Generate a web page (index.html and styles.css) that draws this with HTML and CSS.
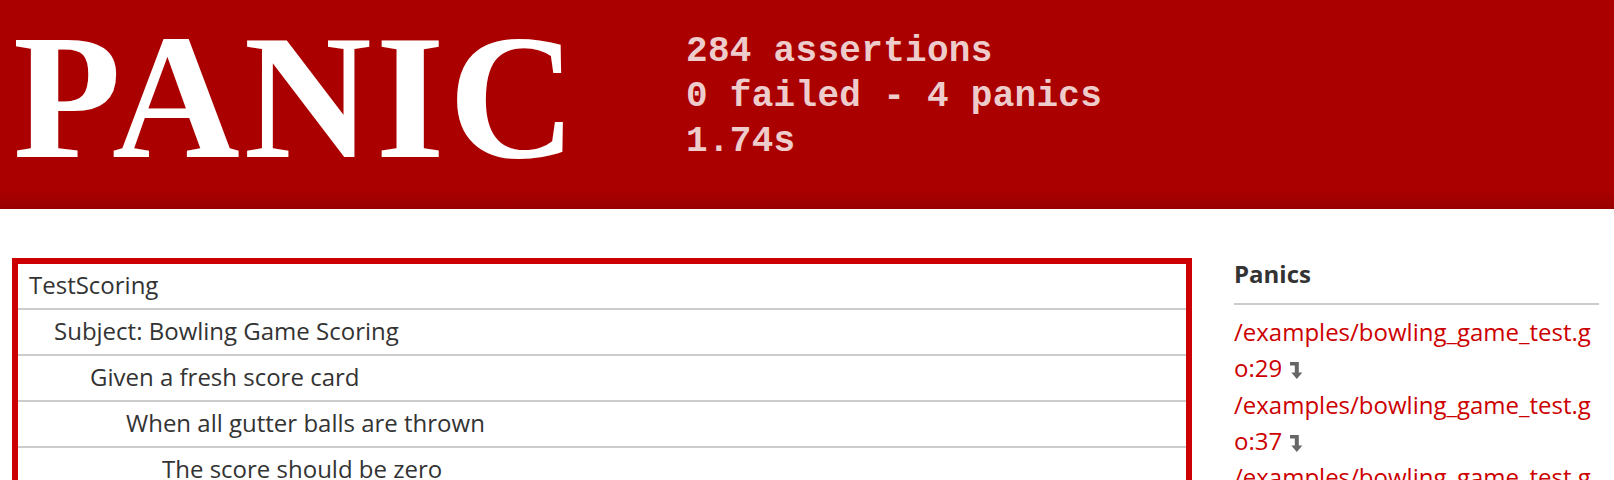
FILE: index.html
```html
<!DOCTYPE html>
<html>
<head>
<meta charset="utf-8">
<link rel="stylesheet" href="styles.css">
</head>
<body>
<header class="banner">
  <div class="status">PANIC</div>
  <div class="stats">
    <div>284 assertions</div>
    <div>0 failed - 4 panics</div>
    <div>1.74s</div>
  </div>
</header>
<main class="main">
  <section class="results">
    <div class="row depth-0">TestScoring</div>
    <div class="row depth-1">Subject: Bowling Game Scoring</div>
    <div class="row depth-2">Given a fresh score card</div>
    <div class="row depth-3">When all gutter balls are thrown</div>
    <div class="row depth-4">The score should be zero</div>
    <div class="row depth-3">When all throws knock down only one pin</div>
    <div class="row depth-4">The score should be 20</div>
  </section>
  <aside class="sidebar">
    <h3 class="side-title">Panics</h3>
    <ul class="panic-list">
      <li><a class="panic-link" href="#">/examples/bowling_game_test.go:29</a> <svg class="jump" viewBox="0 0 13 17" width="13" height="17"><path d="M0 0 H8.8 V10.5 H12.3 L6.8 17 L1.3 10.5 H4.8 V3.6 H0 Z" fill="#666"/></svg></li>
      <li><a class="panic-link" href="#">/examples/bowling_game_test.go:37</a> <svg class="jump" viewBox="0 0 13 17" width="13" height="17"><path d="M0 0 H8.8 V10.5 H12.3 L6.8 17 L1.3 10.5 H4.8 V3.6 H0 Z" fill="#666"/></svg></li>
      <li><a class="panic-link" href="#">/examples/bowling_game_test.go:45</a> <svg class="jump" viewBox="0 0 13 17" width="13" height="17"><path d="M0 0 H8.8 V10.5 H12.3 L6.8 17 L1.3 10.5 H4.8 V3.6 H0 Z" fill="#666"/></svg></li>
      <li><a class="panic-link" href="#">/examples/bowling_game_test.go:53</a> <svg class="jump" viewBox="0 0 13 17" width="13" height="17"><path d="M0 0 H8.8 V10.5 H12.3 L6.8 17 L1.3 10.5 H4.8 V3.6 H0 Z" fill="#666"/></svg></li>
    </ul>
  </aside>
</main>
</body>
</html>
```

FILE: styles.css
```css
html, body {
  margin: 0;
  padding: 0;
  background: #fff;
}

body {
  font-family: "Open Sans", "Liberation Sans", sans-serif;
  color: #333;
}

.banner {
  display: flex;
  align-items: flex-start;
  height: 209px;
  box-sizing: border-box;
  padding-left: 13px;
  background: linear-gradient(to bottom, #aa0000 0, #ab0000 90%, #990000 100%);
}

.status {
  width: 673px;
  flex-shrink: 0;
  font-family: "Liberation Serif", "Times New Roman", serif;
  font-weight: bold;
  font-size: 177px;
  line-height: 177px;
  letter-spacing: 4px;
  color: #fff;
  margin-top: 9px;
}

.stats {
  padding-top: 29px;
  font-family: "Liberation Mono", "Courier New", monospace;
  font-weight: bold;
  font-size: 36px;
  line-height: 45px;
  letter-spacing: 0.3px;
  color: #eecccc;
}

.main {
  display: flex;
  align-items: flex-start;
  gap: 42px;
  padding: 49px 15px 0 12px;
}

.results {
  width: 1180px;
  box-sizing: border-box;
  border: 6px solid #cc0000;
  flex-shrink: 0;
}

.row {
  font-size: 24px;
  line-height: 32px;
  padding: 5px 10px 7px 11px;
  border-top: 2px solid #cccccc;
}

.row:first-child {
  border-top: none;
}

.depth-1 { padding-left: 36px; }
.depth-2 { padding-left: 72px; }
.depth-3 { padding-left: 108px; }
.depth-4 { padding-left: 144px; }

.sidebar {
  width: 365px;
  flex-shrink: 0;
}

.side-title {
  margin: 0;
  font-size: 24px;
  line-height: 32px;
  font-weight: bold;
  color: #333;
  padding-bottom: 13px;
  border-bottom: 2px solid #cccccc;
}

.panic-list {
  list-style: none;
  margin: 9px 0 0;
  padding: 0;
  font-size: 24px;
  line-height: 36.3px;
  word-break: break-all;
}

.panic-link {
  color: #cc0000;
  text-decoration: none;
}

.jump {
  vertical-align: -2px;
  margin-left: 2px;
}
```
